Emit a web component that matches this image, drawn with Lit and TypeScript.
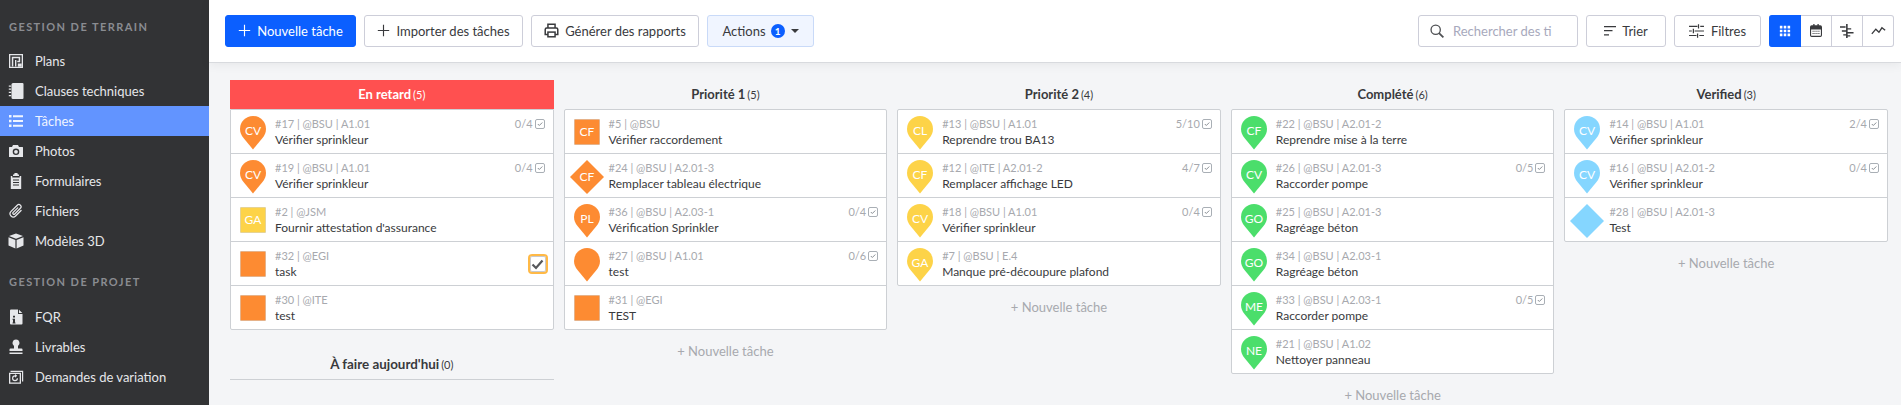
import { LitElement, html, css, svg } from "lit";
import { customElement } from "lit/decorators.js";

const C: Record<string, string> = { o: "#fd8b32", y: "#fdd348", g: "#4bde6b", b: "#85d6ff" };

type Task = { shape: "pin" | "sq" | "dia"; col: string; ini?: string; meta: string; title: string; count?: string; sel?: boolean };
const t = (shape: Task["shape"], col: string, ini: string, meta: string, title: string, count = "", sel = false): Task =>
  ({ shape, col, ini, meta, title, count, sel });

const COLS = [
  { name: "En retard", n: 5, red: true, tasks: [
    t("pin", "o", "CV", "#17 | @BSU | A1.01", "Vérifier sprinkleur", "0/4"),
    t("pin", "o", "CV", "#19 | @BSU | A1.01", "Vérifier sprinkleur", "0/4"),
    t("sq", "y", "GA", "#2 | @JSM", "Fournir attestation d'assurance"),
    t("sq", "o", "", "#32 | @EGI", "task", "", true),
    t("sq", "o", "", "#30 | @ITE", "test"),
  ] },
  { name: "Priorité 1", n: 5, add: true, tasks: [
    t("sq", "o", "CF", "#5 | @BSU", "Vérifier raccordement"),
    t("dia", "o", "CF", "#24 | @BSU | A2.01-3", "Remplacer tableau électrique"),
    t("pin", "o", "PL", "#36 | @BSU | A2.03-1", "Vérification Sprinkler", "0/4"),
    t("pin", "o", "", "#27 | @BSU | A1.01", "test", "0/6"),
    t("sq", "o", "", "#31 | @EGI", "TEST"),
  ] },
  { name: "Priorité 2", n: 4, add: true, tasks: [
    t("pin", "y", "CL", "#13 | @BSU | A1.01", "Reprendre trou BA13", "5/10"),
    t("pin", "y", "CF", "#12 | @ITE | A2.01-2", "Remplacer affichage LED", "4/7"),
    t("pin", "y", "CV", "#18 | @BSU | A1.01", "Vérifier sprinkleur", "0/4"),
    t("pin", "y", "GA", "#7 | @BSU | E.4", "Manque pré-découpure plafond"),
  ] },
  { name: "Complété", n: 6, add: true, tasks: [
    t("pin", "g", "CF", "#22 | @BSU | A2.01-2", "Reprendre mise à la terre"),
    t("pin", "g", "CV", "#26 | @BSU | A2.01-3", "Raccorder pompe", "0/5"),
    t("pin", "g", "GO", "#25 | @BSU | A2.01-3", "Ragréage béton"),
    t("pin", "g", "GO", "#34 | @BSU | A2.03-1", "Ragréage béton"),
    t("pin", "g", "ME", "#33 | @BSU | A2.03-1", "Raccorder pompe", "0/5"),
    t("pin", "g", "NE", "#21 | @BSU | A1.02", "Nettoyer panneau"),
  ] },
  { name: "Verified", n: 3, add: true, tasks: [
    t("pin", "b", "CV", "#14 | @BSU | A1.01", "Vérifier sprinkleur", "2/4"),
    t("pin", "b", "CV", "#16 | @BSU | A2.01-2", "Vérifier sprinkleur", "0/4"),
    t("dia", "b", "", "#28 | @BSU | A2.01-3", "Test"),
  ] },
];

const I = (w: number, h: number, body: unknown, vb = "0 0 16 16") =>
  html`<svg width=${w} height=${h} viewBox=${vb} fill="currentColor" aria-hidden="true">${body}</svg>`;

const NAV1: [string, unknown, boolean?][] = [
  ["Plans", svg`<path fill-rule="evenodd" d="M1 1h14v14H1zM2.300 2.300v11.400h11.400V2.300z"/><path d="M3.800 3.800h8.400v5.500H9.300V7.700h1.400V5.300H5.300v8.200H3.800zM7 7h1.400v6.500H7z"/><path d="M11 10.500h2.700v3.200H9.800v-3.200z"/>`],
  ["Clauses techniques", svg`<path d="M3.500 1.500A1.500 1.500 0 0 1 5 0h9.500a1 1 0 0 1 1 1v14a1 1 0 0 1-1 1H5a1.500 1.500 0 0 1-1.500-1.500z"/><path d="M.8 2.500h2.400v1.300H.8zM.8 5.500h2.400v1.300H.8zM.8 8.800h2.400v1.300H.8zM.8 12h2.400v1.300H.8z"/>`],
  ["Tâches", svg`<path d="M1 2h2.500v2.500H1zM1 6.800h2.500v2.500H1zM1 11.500h2.500V14H1zM5 2.300h10v2H5zM5 7h10v2H5zM5 11.700h10v2H5z"/>`, true],
  ["Photos", svg`<path fill-rule="evenodd" d="M5 2h5l1 2h3.500a.5.500 0 0 1 .5.500V14H1V4.500A.5.500 0 0 1 1.500 4H4zM8 5.500a3.300 3.300 0 1 0 0 6.600 3.300 3.300 0 0 0 0-6.600zm0 1.400a1.900 1.900 0 1 1 0 3.800 1.900 1.900 0 0 1 0-3.800z"/>`],
  ["Formulaires", svg`<path fill-rule="evenodd" d="M6.200 1.500a1.800 1.800 0 0 1 3.600 0H11V3H5V1.500zM2.800 3H4.300v1.400h7.400V3h1.500v13H2.800zM5 6.500v1h6v-1zM5 9v1h6V9zM5 11.500v1h6v-1z"/>`],
  ["Fichiers", svg`<g transform="rotate(45 8 8)"><path fill="none" stroke="currentColor" stroke-width="1.250" stroke-linecap="round" d="M11.200 4v7.800a3.200 3.200 0 0 1-6.400 0V3a2.200 2.200 0 0 1 4.400 0v8a1.100 1.100 0 0 1-2.200 0V4.500"/></g>`],
  ["Modèles 3D", svg`<path d="M8 .5 15 3 8 5.800 1 3zM.5 4.300 7.400 7v8.500L.5 12.500zM15.500 4.300 8.600 7v8.500l6.900-3z"/>`],
];
const NAV2: [string, unknown, boolean?][] = [
  ["FQR", svg`<path fill-rule="evenodd" d="M3 .5h7V5h4.500v9.500a1 1 0 0 1-1 1H3a1 1 0 0 1-1-1v-13a1 1 0 0 1 1-1zm8 .2 3.300 3.300H11zM5 6.800v1.800h2V6.800zm-.500 3v1h.5v2.700H4.500v1h3v-1H7V9.800z"/>`],
  ["Livrables", svg`<path d="M8 .5a3.500 3.500 0 0 1 2 6.400V9.500h3.500a1 1 0 0 1 1 1V12h-13v-1.500a1 1 0 0 1 1-1H6V6.900A3.500 3.500 0 0 1 8 .5zM1.500 13.500h13V15h-13z"/>`],
  ["Demandes de variation", svg`<path fill-rule="evenodd" d="M2.500 1.800h12.700v10.800h-1.200V3H2.500zM1 3.800h12v11H1zm1.300 1.300V13.500h9.400V5.100z"/><path d="M7 6.200a3 3 0 1 0 3 3H8.800A1.800 1.800 0 1 1 7 7.400V8.700l2.300-1.900L7 5z"/>`],
];

const plus = I(13, 13, svg`<path d="M7.300 1h1.400v6.300H15v1.400H8.700V15H7.300V8.700H1V7.300h6.300z"/>`);
const printer = html`<svg width="15" height="15" viewBox="0 0 16 16" fill="none" stroke="currentColor" stroke-width="1.600" aria-hidden="true"><path d="M4.200 5V1.300h7.600V5M4.200 12.300H1.300V6.800A1.600 1.600 0 0 1 2.900 5.200h10.200a1.600 1.600 0 0 1 1.600 1.600v5.500h-2.900"/><rect x="4.200" y="9.700" width="7.600" height="5"/></svg>`;
const search = html`<svg width="14" height="14" viewBox="0 0 16 16" fill="none" stroke="currentColor" stroke-width="1.500" aria-hidden="true"><circle cx="6.500" cy="6.500" r="5.300"/><path d="m10.300 10.300 5 5" stroke-width="2"/></svg>`;
const sort = I(12, 10, svg`<path d="M0 0h12v1.300H0zM0 4h8.500v1.300H0zM0 8.200h5v1.300H0z"/>`, "0 0 12 10");
const filters = I(15, 14, svg`<path d="M0 2h9v1.100H0zM12 2h4v1.100h-4zM9.500 .2h1.300v4.600H9.500zM0 6.900h3v1.100H0zM6 6.900h10v1.100H6zM4 5.200h1.300v4.600H4zM0 11.800h8v1.100H0zM11 11.800h5v1.100h-5zM8.500 10.100h1.300v4.600H8.500z"/>`, "0 0 16 15");
const gridI = I(12, 12, svg`<path d="M1 1h3v3H1zM5.500 1h3v3h-3zM10 1h3v3h-3zM1 5.500h3v3H1zM5.500 5.500h3v3h-3zM10 5.500h3v3h-3zM1 10h3v3H1zM5.500 10h3v3h-3zM10 10h3v3h-3z"/>`, "0 0 14 14");
const cal = I(12, 13, svg`<path fill-rule="evenodd" d="M2 1.500h1.800V0h1.500v1.500h3.400V0h1.500v1.500H12A2 2 0 0 1 14 3.500V13a2 2 0 0 1-2 2H2a2 2 0 0 1-2-2V3.500A2 2 0 0 1 2 1.500zM1.300 6.300V13c0 .4.300.7.700.7h10c.4 0 .7-.3.7-.7V6.300zM3 7.800h1.200V9H3zm2.200 0h1.200V9H5.200zm2.300 0h1.200V9H7.500zm2.300 0H11V9H9.800zM3 10.300h1.200v1.200H3zm2.200 0h1.200v1.200H5.200zm2.300 0h1.200v1.200H7.500zm2.300 0H11v1.200H9.800z"/>`, "0 0 14 15");
const gantt = I(14, 14, svg`<path d="M6.500 0h1.700v15H6.500zM0 2.500h6v1.500H0zM2 6.700h4.500v1.500H2zM3.500 10.900h3v1.500h-3zM8 4.500h4v1.500H8zM8 8.700h6.500v1.500H8zM8 12h3v1.500H8z"/>`, "0 0 15 15");
const line = html`<svg width="15" height="9" viewBox="0 0 16 10" fill="none" stroke="currentColor" stroke-width="1.500" aria-hidden="true"><path d="M.6 8.800 5 3.500l3.500 3.500L11.800 2 15.400 4.800"/></svg>`;
const checkSmall = html`<svg width="10" height="10" viewBox="0 0 10 10" fill="none" aria-hidden="true"><rect x=".5" y=".5" width="9" height="9" rx="1.500" stroke="#a9afb5"/><path d="m2.800 5 1.500 1.500 3-3" stroke="#8a9096"/></svg>`;

@customElement("app-root")
export class AppRoot extends LitElement {
  static styles = css`
    :host { display: block; height: 405px; overflow: hidden; font-family: Lato, "Liberation Sans", sans-serif; background: #f4f5f7; color: #393a3d; }
    .app { display: flex; height: 405px; }
    .side { width: 209px; flex: none; background: #323335; color: #e6e7ea; box-sizing: border-box; padding-top: 18px; }
    .sec { font-size: 11px; line-height: 18px; letter-spacing: 1.42px; color: #8a8c91; font-weight: 700; padding-left: 9px; margin-bottom: 10px; white-space: nowrap; }
    .sec.two { margin-top: 17px; margin-bottom: 11px; }
    .nav { display: flex; align-items: center; height: 30px; padding-left: 8px; font-size: 13px; gap: 11px; white-space: nowrap; }
    .nav svg { flex: none; }
    .nav.on { background: #6294ff; color: #f0f5ff; }
    .main { flex: 1; min-width: 0; display: flex; flex-direction: column; }
    .bar { height: 63px; flex: none; box-sizing: border-box; background: #fff; border-bottom: 1px solid #d8dade; box-shadow: 0 2px 10px rgba(0, 0, 0, .06); display: flex; align-items: center; gap: 8px; padding: 0 7px 1px 16px; position: relative; }
    .btn { height: 32px; box-sizing: border-box; border: 1px solid #cdced9; border-radius: 3px; background: #fff; color: #393a3d; font-size: 13px; display: flex; align-items: center; justify-content: center; gap: 6px; white-space: nowrap; }
    .btn.pri { background: #0b5fff; border-color: #0b5fff; color: #fff; width: 131px; }
    .w159 { width: 159px; }
    .w168 { width: 168px; }
    .btn.act { width: 107px; background: #f0f5ff; border-color: #c9daf8; gap: 5px; }
    .badge { width: 14px; height: 14px; border-radius: 50%; background: #0b5fff; color: #fff; font-size: 10px; font-weight: 700; display: flex; align-items: center; justify-content: center; }
    .caret { width: 0; height: 0; border: 4px solid transparent; border-top: 4px solid #393a3d; border-bottom: 0; margin-left: 1px; }
    .spacer { flex: 1; }
    .btn.search { width: 160px; justify-content: flex-start; padding-left: 11px; gap: 9px; color: #a7a9bc; }
    .search svg { color: #4e5053; flex: none; }
    .w80 { width: 80px; gap: 6px; }
    .w87 { width: 87px; gap: 7px; }
    .seg { display: flex; height: 32px; width: 125px; }
    .seg span { flex: 1; box-sizing: border-box; display: flex; align-items: center; justify-content: center; border: 1px solid #cdced9; border-left: 0; color: #393a3d; background: #fff; }
    .seg span:first-child { flex: none; width: 32px; border-color: #0b5fff; background: #0b5fff; color: #fff; border-radius: 3px 0 0 3px; }
    .seg span:last-child { border-radius: 0 3px 3px 0; }
    .board { flex: 1; display: grid; grid-template-columns: repeat(5, 1fr); gap: 10px; padding: 17px 13px 0 21px; align-items: start; min-height: 0; overflow: hidden; }
    .head { height: 29px; display: flex; align-items: center; justify-content: center; gap: 2px; font-size: 13px; font-weight: 700; color: #393a3d; padding-bottom: 1px; box-sizing: border-box; }
    .head small { font-size: 11px; font-weight: 400; }
    .head.red { background: #ff5050; color: #fff; }
    .box { background: #fff; border: 1px solid #cdd0d4; border-radius: 2px; }
    .head.red + .box { border-radius: 0 0 2px 2px; }
    .row { height: 44px; box-sizing: border-box; display: flex; padding-left: 9px; border-top: 1px solid #cdd0d4; position: relative; }
    .row:first-child { border-top: 0; height: 43px; }
    .ic { width: 26px; flex: none; display: flex; justify-content: center; margin-top: 6px; height: 34px; }
    .ic svg { overflow: visible; }
    .ic text { font: 12px Lato, sans-serif; fill: #fff; text-anchor: middle; }
    .txt { margin-left: 9px; flex: 1; min-width: 0; padding-top: 5px; }
    .meta { font-size: 11px; line-height: 17px; color: #a7a9ae; white-space: nowrap; }
    .title { font-size: 12px; line-height: 17px; margin-top: -1px; color: #393a3d; white-space: nowrap; }
    .count { position: absolute; right: 8px; top: 5px; font-size: 11px; line-height: 17px; color: #a7a9ae; display: flex; align-items: center; gap: 2px; }
    .sel { position: absolute; right: 5px; top: 12px; width: 20px; height: 20px; box-sizing: border-box; border: 2px solid #ffb946; border-radius: 4px; background: #fff; box-shadow: inset 0 0 0 1px #c9cacd; display: flex; align-items: center; justify-content: center; color: #55575b; }
    .add { text-align: center; font-size: 13px; line-height: 20px; color: #a7a9ae; margin-top: 11px; }
    .today { margin-top: 26px; height: 24px; box-sizing: border-box; border-bottom: 1px solid #cdd0d4; display: flex; justify-content: center; align-items: flex-start; gap: 2px; font-size: 13.400px; font-weight: 700; line-height: 17px; }
    .today small { font-size: 11px; font-weight: 400; }
  `;

  private marker(x: Task) {
    const c = C[x.col];
    if (x.shape === "pin")
      return html`<svg width="26" height="34" viewBox="0 0 26 34" aria-hidden="true"><path fill=${c} d="M13 0a13 13 0 0 1 13 13c0 3.600-1.300 6.300-3.500 9L13 33.500 3.500 22C1.300 19.300 0 16.600 0 13A13 13 0 0 1 13 0z"/>${x.ini ? svg`<text x="13" y="19">${x.ini}</text>` : ""}</svg>`;
    if (x.shape === "dia")
      return html`<svg width="26" height="34" viewBox="0 0 26 34" aria-hidden="true"><path fill=${c} d="M13 0 30 17 13 34-4 17z"/>${x.ini ? svg`<text x="13" y="20.500">${x.ini}</text>` : ""}</svg>`;
    return html`<svg width="26" height="34" viewBox="0 0 26 34" aria-hidden="true"><rect x=".5" y="3.500" width="25" height="25" fill=${c} stroke="#00000018"/>${x.ini ? svg`<text x="13" y="20">${x.ini}</text>` : ""}</svg>`;
  }

  private nav(items: [string, unknown, boolean?][]) {
    return items.map(([n, ic, on]) => html`<div class="nav ${on ? "on" : ""}">${I(16, 16, ic)}<span>${n}</span></div>`);
  }

  render() {
    return html`<div class="app">
      <aside class="side">
        <div class="sec">GESTION DE TERRAIN</div>
        ${this.nav(NAV1)}
        <div class="sec two">GESTION DE PROJET</div>
        ${this.nav(NAV2)}
      </aside>
      <div class="main">
        <div class="bar">
          <div class="btn pri">${plus}Nouvelle tâche</div>
          <div class="btn w159">${plus}Importer des tâches</div>
          <div class="btn w168">${printer}Générer des rapports</div>
          <div class="btn act">Actions<span class="badge">1</span><span class="caret"></span></div>
          <div class="spacer"></div>
          <div class="btn search">${search}<span>Rechercher des ti</span></div>
          <div class="btn w80">${sort}Trier</div>
          <div class="btn w87">${filters}Filtres</div>
          <div class="seg"><span>${gridI}</span><span>${cal}</span><span>${gantt}</span><span>${line}</span></div>
        </div>
        <div class="board">
          ${COLS.map((c) => html`<section>
            <div class="head ${c.red ? "red" : ""}">${c.name}<small>(${c.n})</small></div>
            <div class="box">
              ${c.tasks.map((x) => html`<div class="row">
                <div class="ic">${this.marker(x)}</div>
                <div class="txt"><div class="meta">${x.meta}</div><div class="title">${x.title}</div></div>
                ${x.count ? html`<div class="count">${x.count}${checkSmall}</div>` : ""}
                ${x.sel ? html`<div class="sel"><svg width="13" height="11" viewBox="0 0 13 11" fill="none" stroke="currentColor" stroke-width="2.200"><path d="m1.500 5.500 3.500 3.500 6.500-7.500"/></svg></div>` : ""}
              </div>`)}
            </div>
            ${c.add ? html`<div class="add">+ Nouvelle tâche</div>` : html`<div class="today">À faire aujourd'hui<small>(0)</small></div>`}
          </section>`)}
        </div>
      </div>
    </div>`;
  }
}
